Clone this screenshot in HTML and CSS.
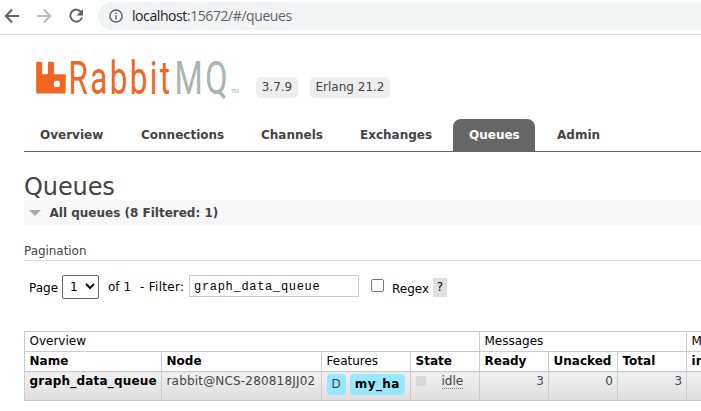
FILE: index.html
```html
<!DOCTYPE html>
<html lang="en">
<head>
<meta charset="utf-8">
<title>RabbitMQ Management</title>
<link rel="stylesheet" href="styles.css">
</head>
<body>
<div class="browser">
  <svg class="nav" width="96" height="32" viewBox="0 0 96 32" fill="none" stroke="#5f6368" stroke-width="2">
    <path d="M19 16H6M12 9.500 5.800 16 12 22.500"/>
    <path stroke="#babcbe" d="M37 16H50M44 9.500 50.200 16 44 22.500"/>
    <path d="M81.300 12.300A6 6 0 1 0 82 17.500"/>
    <path fill="#5f6368" stroke="none" d="M83 9v6.500h-6.500z"/>
  </svg>
  <div class="address">
    <svg width="14" height="14" viewBox="0 0 14 14" fill="none" stroke="#5f6368" stroke-width="1.500"><circle cx="7" cy="7" r="6.100"/><path d="M7 6.300v4.200M7 3.500v1.500"/></svg>
    <span class="url"><b>localhost</b>:15672/#/queues</span>
  </div>
</div>
<div class="page">
  <header>
    <svg class="logo" width="208" height="50" viewBox="0 0 208 50">
      <path fill="#f26522" transform="translate(1.200 5.700) scale(1.230 1.320)" d="M23.035 9.601h-7.677a.956.956 0 0 1-.962-.962V.962A.956.956 0 0 0 13.433 0H10.560a.956.956 0 0 0-.962.962V8.640a.956.956 0 0 1-.962.962H5.762a.956.956 0 0 1-.961-.962V.962A.956.956 0 0 0 3.839 0H.959A.956.956 0 0 0 0 .962v22.076A.956.956 0 0 0 .965 24h22.070a.956.956 0 0 0 .965-.962V10.580a.956.956 0 0 0-.965-.980zm-3.860 8.152a1.437 1.437 0 0 1-1.437 1.443h-1.924a1.437 1.437 0 0 1-1.436-1.443v-1.917a1.437 1.437 0 0 1 1.436-1.443h1.924a1.437 1.437 0 0 1 1.437 1.443z"/>
      <text class="word" x="33.500" y="37.500" fill="#f26522" textLength="104" lengthAdjust="spacingAndGlyphs">Rabbit</text>
      <text class="word" x="139.500" y="37.500" fill="#a9b5ae" textLength="55.500" lengthAdjust="spacingAndGlyphs">MQ</text>
      <text class="tm" x="196" y="37" fill="#a9b5ae" textLength="8">TM</text>
    </svg>
    <span class="version v1">3.7.9</span><span class="version v2">Erlang 21.2</span>
  </header>
  <nav class="tabs">
    <a class="t1">Overview</a><a class="t2">Connections</a><a class="t3">Channels</a><a class="t4">Exchanges</a><a class="t5 selected">Queues</a><a class="t6">Admin</a>
  </nav>
  <h1>Queues</h1>
  <h2><i class="arrow"></i><span>All queues (8 Filtered: 1)</span></h2>
  <h3>Pagination</h3>
  <div class="filter">
    <span class="f-page">Page</span>
    <span class="select">1<svg width="10" height="7" viewBox="0 0 10 7" fill="none" stroke="#111" stroke-width="2"><path d="M1 1l4 4 4-4"/></svg></span>
    <span class="f-of">of 1</span><span class="f-label">- Filter:</span>
    <span class="input">graph_data_queue</span>
    <span class="checkbox"></span><span class="regex">Regex</span><span class="help">?</span>
  </div>
  <table>
    <colgroup><col class="c1"><col class="c2"><col class="c3"><col class="c4"><col class="c5"><col class="c5"><col class="c5"><col class="c6"></colgroup>
    <tr><td colspan="4">Overview</td><td colspan="3">Messages</td><td>Message rates</td></tr>
    <tr><th>Name</th><th>Node</th><td>Features</td><th>State</th><th>Ready</th><th>Unacked</th><th>Total</th><th>incoming</th></tr>
    <tr class="row"><td class="name">graph_data_queue</td><td class="node">rabbit@NCS-280818JJ02</td><td class="features"><span class="tag">D</span><span class="tag policy">my_ha</span></td><td><i class="state"></i><span class="idle">idle</span></td><td class="r">3</td><td class="r z">0</td><td class="r">3</td><td></td></tr>
  </table>
</div>
</body>
</html>
```
FILE: styles.css
```css
* { box-sizing: border-box; }
body { margin: 0; width: 701px; height: 411px; overflow: hidden; background: #fff; font: 12px/16px "DejaVu Sans", Verdana, sans-serif; color: #444; }
.browser { height: 35px; border-bottom: 1px solid #d9dbde; display: flex; }
.nav { flex: none; margin-right: 2px; }
.address { flex: 1; height: 28px; margin-top: 2px; background: #f1f3f4; border-radius: 14px 0 0 14px; display: flex; align-items: center; padding-left: 11px; }
.url { font: 14px/20px "Open Sans", sans-serif; color: #5f6368; margin-left: 9px; letter-spacing: -.42px; }
.url b { font-weight: 400; color: #202124; }
.page { padding-left: 24px; overflow: hidden; }
header { display: flex; height: 84px; padding: 21px 0 0 11px; }
.logo { flex: none; }
.word { font: 400 45.500px Roboto, sans-serif; letter-spacing: 3.500px; }
.tm { font: 6px Roboto, sans-serif; }
.version { height: 21px; line-height: 21px; margin-top: 21px; background: #eee; border-radius: 5px; text-align: center; white-space: nowrap; }
.v1 { width: 42px; margin-left: 13px; }
.v2 { width: 80px; margin-left: 12px; }
.tabs { display: flex; height: 33px; border-bottom: 1px solid #666; font-weight: bold; }
.tabs a { line-height: 33px; height: 32px; padding-left: 16px; white-space: nowrap; }
.t1 { width: 101px; } .t2 { width: 120px; } .t3 { width: 99px; } .t4 { width: 109px; } .t5 { width: 82px; } .t6 { margin-left: 6px; }
.tabs .selected { background: #666; color: #fff; border-radius: 8px 8px 0 0; }
h1 { font: 24px/30px "DejaVu Sans", Verdana, sans-serif; margin: 20px 0 0; height: 28px; letter-spacing: -.1px; }
h2 { display: flex; align-items: center; height: 25px; margin: 0; background: #f7f7f7; font-size: 12px; }
.arrow { border: 6px solid transparent; border-top-color: #aaa; border-bottom: 0; margin: 1px 8.500px 0 5px; }
h3 { font-size: 12px; font-weight: 400; margin: 18px 0 0; height: 18px; border-bottom: 1px solid #e0e0e0; letter-spacing: -.05px; }
.filter { display: flex; height: 70px; padding: 14px 0 0 5px; color: #000; line-height: 24px; }
.filter span { white-space: nowrap; flex: none; }
.f-page { width: 33px; padding-top: 1px; }
.filter .select { width: 37px; height: 24px; border: 1px solid #666; border-radius: 2px; padding-left: 7px; line-height: 23px; }
.select svg { margin-left: 7px; vertical-align: 1px; }
.f-of { width: 32px; margin-left: 9px; }
.f-label { width: 49px; letter-spacing: .3px; }
.filter .input { width: 170px; height: 22px; border: 1px solid #ccc; font: 12px/23px "Liberation Mono", monospace; padding-left: 4px; letter-spacing: .7px; }
.checkbox { width: 13px; height: 13px; border: 1px solid #767676; border-radius: 2px; margin: 4px 8px 0 12px; }
.regex { width: 41px; margin-top: 2px; }
.filter .help { width: 14px; height: 19px; line-height: 19px; margin-top: 3px; background: #e0e0e0; text-align: center; }
table { border-collapse: collapse; table-layout: fixed; width: 731px; color: #000; }
.c1 { width: 137px; } .c2 { width: 160px; } .c3 { width: 89px; } .c4, .c5 { width: 69px; }
td, th { border: 1px solid #ccc; height: 20px; padding: 0 4px 0 4.500px; text-align: left; white-space: nowrap; line-height: 19px; overflow: hidden; }
.row td { height: 29px; background: linear-gradient(#f0f0f0, #dedede); vertical-align: top; color: #444; }
.row td.name { font-weight: bold; color: #000; letter-spacing: .2px; }
.row td.node { letter-spacing: .18px; }
.row td.r { text-align: right; padding-right: 4px; }
.row td.r:not(.z) { color: #446; }
.tag { display: inline-block; background: #98e8ff; border-radius: 4px; padding: 0 5px; height: 21px; line-height: 21px; margin: 2px 4px 0 0; }
.policy { color: #000; font-weight: bold; margin-right: 0; letter-spacing: .4px; }
.state { display: inline-block; width: 10px; height: 10px; background: #d8d8d8; vertical-align: -1px; margin-right: 16px; }
.idle { display: inline-block; height: 17px; border-bottom: 1px dotted #777; }
```
